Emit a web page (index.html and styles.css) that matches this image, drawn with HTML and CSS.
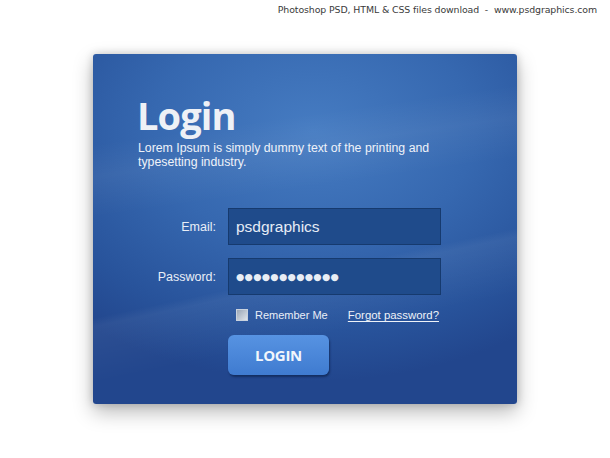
FILE: index.html
```html
<!DOCTYPE html>
<html>
<head>
<meta charset="utf-8">
<link rel="stylesheet" href="styles.css">
</head>
<body>
<div class="topline">Photoshop PSD, HTML &amp; CSS files download &nbsp;-&nbsp; www.psdgraphics.com</div>
<div class="card">
  <h1 class="title">Login</h1>
  <p class="desc">Lorem Ipsum is simply dummy text of the printing and<br>typesetting industry.</p>
  <div class="form">
    <div class="row">
      <label class="label">Email:</label>
      <div class="field">psdgraphics</div>
    </div>
    <div class="row">
      <label class="label">Password:</label>
      <div class="field dots">●●●●●●●●●●●●</div>
    </div>
    <div class="opts">
      <span class="check"></span>
      <span class="remember">Remember Me</span>
      <a class="forgot" href="#">Forgot password?</a>
    </div>
    <div class="btnrow">
      <button class="btn">LOGIN</button>
    </div>
  </div>
</div>
</body>
</html>
```
FILE: styles.css
```css
html, body { margin: 0; padding: 0; background: #fff; }
body { width: 610px; height: 458px; overflow: hidden; font-family: "Liberation Sans", Arial, sans-serif; }
.topline {
  height: 20px;
  padding: 4px 13px 0 0;
  text-align: right;
  font-family: "DejaVu Sans", sans-serif;
  font-size: 9.4px;
  color: #3a3a3a;
  box-sizing: border-box;
  margin-bottom: 34px;
  letter-spacing: -0.1px;
}
.card {
  margin-left: 93px;
  width: 424px;
  height: 350px;
  box-sizing: border-box;
  border-radius: 3px;
  padding: 42px 0 0 44px;
  background:
    linear-gradient(168deg, rgba(255,255,255,0) 60%, rgba(255,255,255,0.05) 62%, rgba(255,255,255,0) 75%),
    linear-gradient(172deg, rgba(255,255,255,0) 22%, rgba(255,255,255,0.05) 30%, rgba(255,255,255,0) 40%),
    radial-gradient(ellipse 360px 250px at 52% 22%, #467cc2 0%, #3668b0 45%, #28539b 80%, #22468d 100%);
  box-shadow: 0 8px 20px rgba(0,0,0,0.28), 0 0 8px rgba(0,0,0,0.18);
  color: #eef2f8;
}
.title {
  margin: 0;
  font-family: "Open Sans", sans-serif;
  font-weight: 700;
  font-size: 38px;
  line-height: 38px;
  color: #eef1f6;
  letter-spacing: -0.9px;
}
.desc {
  margin: 7px 0 0 1px;
  font-size: 12.3px;
  line-height: 14px;
  color: #eef2f9;
}
.form { margin-top: 39px; margin-left: -44px; }
.row { display: flex; align-items: center; margin-bottom: 13px; }
.label {
  width: 123px;
  text-align: right;
  font-size: 12.5px;
  color: #e9eef7;
  margin-right: 12px;
}
.field {
  width: 213px;
  height: 37px;
  box-sizing: border-box;
  background: #1f4b8b;
  border: 1px solid #163a6e;
  color: #e6ecf6;
  font-size: 15.5px;
  line-height: 35px;
  padding-left: 7px;
}
.dots {
  font-family: "DejaVu Sans", sans-serif;
  font-size: 9.5px;
  letter-spacing: 0.3px;
  color: #e8edf5;
}
.opts {
  display: flex;
  align-items: center;
  margin-left: 143px;
  margin-top: 0;
  width: 205px;
  height: 14px;
}
.check {
  width: 10px;
  height: 10px;
  border: 1px solid #c9d2de;
  background: linear-gradient(135deg, #9aa6b6, #dfe4ea);
  margin-right: 7px;
}
.remember { font-size: 11px; color: #e9eef7; }
.forgot {
  margin-left: auto;
  margin-right: 2px;
  font-size: 11.4px;
  color: #eef2f8;
  text-decoration: underline;
  text-underline-offset: 2px;
}
.btnrow { margin-left: 135px; margin-top: 13px; }
.btn {
  width: 101px;
  height: 40px;
  border: none;
  border-radius: 6px;
  background: linear-gradient(#5793e2, #3f7bd0);
  box-shadow: 1px 2px 2px rgba(10,30,70,0.6);
  color: #f2f6fc;
  font-family: "Open Sans", sans-serif;
  font-weight: 700;
  font-size: 15px;
  letter-spacing: -0.3px;
  padding: 0;
}
```
